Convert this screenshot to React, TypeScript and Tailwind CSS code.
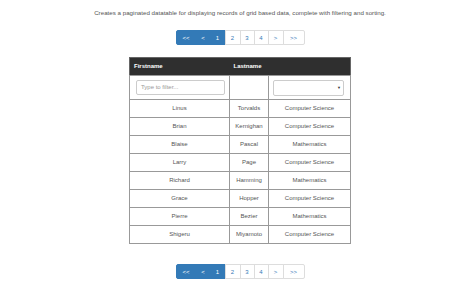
import type { PropsWithChildren } from 'react';

const rows = [
  ['Linus', 'Torvalds', 'Computer Science'],
  ['Brian', 'Kernighan', 'Computer Science'],
  ['Blaise', 'Pascal', 'Mathematics'],
  ['Larry', 'Page', 'Computer Science'],
  ['Richard', 'Hamming', 'Mathematics'],
  ['Grace', 'Hopper', 'Computer Science'],
  ['Pierre', 'Bezier', 'Mathematics'],
  ['Shigeru', 'Miyamoto', 'Computer Science'],
];

function PageItem({ w, active, first, last, children }: { w: string; active?: boolean; first?: boolean; last?: boolean } & PropsWithChildren) {
  return (
    <li
      className={`${w} h-[15px] flex items-center justify-center border -ml-px ${
        active ? 'bg-[#337ab7] border-[#337ab7] text-white' : 'bg-white border-[#ddd] text-[#337ab7]'
      } ${first ? 'rounded-l-[2px] ml-0' : ''} ${last ? 'rounded-r-[2px]' : ''}`}
    >
      {children}
    </li>
  );
}

function Pagination() {
  return (
    <ul className="flex text-[6px] leading-none">
      <PageItem w="w-[21px]" active first>&lt;&lt;</PageItem>
      <PageItem w="w-[15px]" active>&lt;</PageItem>
      <PageItem w="w-[16px]" active>1</PageItem>
      <PageItem w="w-[16px]">2</PageItem>
      <PageItem w="w-[15px]">3</PageItem>
      <PageItem w="w-[15px]">4</PageItem>
      <PageItem w="w-[16px]">&gt;</PageItem>
      <PageItem w="w-[22px]" last>&gt;&gt;</PageItem>
    </ul>
  );
}

export default function App() {
  return (
    <div className="w-[474px] h-[281px] bg-white pl-[6px] flex flex-col items-center text-[#555] font-['Liberation_Sans',Arial,sans-serif]">
      <p className="mt-[9px] text-[6.2px] leading-[7px] text-[#555]">
        Creates a paginated datatable for displaying records of grid based data, complete with filtering and sorting.
      </p>

      <div className="mt-[14px]">
        <Pagination />
      </div>

      <table className="mt-[12px] w-[221px] border-collapse border border-[#666] text-[6px] table-fixed">
        <colgroup>
          <col className="w-[100px]" />
          <col className="w-[39px]" />
          <col className="w-[82px]" />
        </colgroup>
        <thead>
          <tr className="h-[18px] bg-[#2f2f2f] text-white font-bold text-left">
            <th className="pl-[4px]">Firstname</th>
            <th className="pl-[4px]">Lastname</th>
            <th></th>
          </tr>
        </thead>
        <tbody>
          <tr className="h-[24px]">
            <td className="border border-[#999] pl-[6px] pr-[4px]">
              <div className="h-[15px] border border-[#ccc] rounded-[2px] flex items-center pl-[4px] text-[#999]">
                Type to filter...
              </div>
            </td>
            <td className="border border-[#999]"></td>
            <td className="border border-[#999] pl-[4px] pr-[6px]">
              <div className="h-[16px] border border-[#ccc] rounded-[2px] flex items-center justify-end pr-[2px] text-[#333] text-[4px]">
                ▼
              </div>
            </td>
          </tr>
          {rows.map((r) => (
            <tr key={r[0]} className="h-[18px] text-center">
              {r.map((c, i) => (
                <td key={i} className="border border-[#999]">
                  {c}
                </td>
              ))}
            </tr>
          ))}
        </tbody>
      </table>

      <div className="mt-[20px]">
        <Pagination />
      </div>
    </div>
  );
}
